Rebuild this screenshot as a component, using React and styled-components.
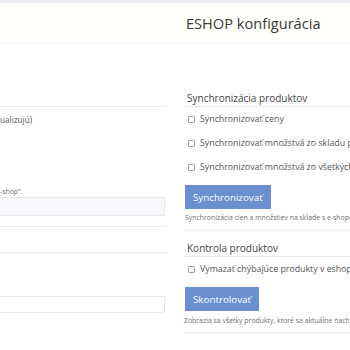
import React from "react";
import styled, { createGlobalStyle } from "styled-components";

const Global = createGlobalStyle`
  html, body { margin: 0; padding: 0; background: #ffffff; }
  body { font-family: "Open Sans", "Noto Sans", Arial, sans-serif; color: #444; }
`;

const Page = styled.div`
  width: 350px;
  height: 350px;
  overflow: hidden;
  background: #ffffff;
  display: flex;
  flex-direction: column;
`;

const TopBand = styled.div`
  height: 3px;
  background: #ebecee;
  flex: none;
`;

const Header = styled.header`
  height: 40px;
  flex: none;
  background: #fffffb;
  border-bottom: 1px solid #f0f0f0;
  display: flex;
  align-items: center;
  padding-left: 186px;
`;

const Title = styled.h1`
  margin: 0;
  font-size: 14.6px;
  font-weight: 400;
  color: #3a3a3a;
  white-space: nowrap;
`;

const Body = styled.div`
  display: grid;
  grid-template-columns: 167px 1fr;
  column-gap: 8px;
  flex: 1;
  min-height: 0;
`;

const LeftCol = styled.div`
  display: flex;
  flex-direction: column;
  min-width: 0;
`;

const Block = styled.div`
  height: ${(p) => p.$h}px;
  border-bottom: 1px solid #ebebeb;
  flex: none;
`;

const LeftLabel = styled.div`
  height: 24px;
  display: flex;
  align-items: center;
  font-size: 8.2px;
  color: #555;
  white-space: nowrap;
`;

const LeftGroup = styled.div`
  padding-top: ${(p) => p.$top || 0}px;
  padding-bottom: ${(p) => p.$bottom || 0}px;
  border-bottom: ${(p) => (p.$line ? "1px solid #ebebeb" : "none")};
  flex: none;
`;

const Field = styled.div`
  width: 165px;
  height: ${(p) => p.$h}px;
  box-sizing: border-box;
  border: 1px solid #e6e8eb;
  border-left: none;
  background: ${(p) => (p.$filled ? "#f5f7fa" : "#ffffff")};
  margin-top: ${(p) => p.$mt || 0}px;
`;

const Hint = styled.div`
  font-size: 6.9px;
  line-height: 10px;
  color: #6f6f6f;
  white-space: nowrap;
  margin-top: ${(p) => p.$mt || 0}px;
  margin-left: ${(p) => p.$ml || 0}px;
`;

const RightCol = styled.div`
  padding-top: 46px;
  padding-left: 9px;
  min-width: 0;
`;

const Section = styled.section`
  border-bottom: 1px solid #eeeeee;
  padding-bottom: ${(p) => p.$pb}px;
  margin-top: ${(p) => p.$mt || 0}px;
`;

const SectionTitle = styled.h2`
  margin: 0;
  height: 16px;
  line-height: 16px;
  padding-left: 3px;
  font-size: 10px;
  font-weight: 400;
  color: #444;
  border-bottom: 1px solid #e6e6e6;
  white-space: nowrap;
`;

const CheckRow = styled.label`
  height: 24px;
  display: flex;
  align-items: center;
  gap: 5px;
  padding-left: 4px;
  font-size: 8.8px;
  color: #555;
  white-space: nowrap;
`;

const Box = styled.span`
  width: 7px;
  height: 7px;
  box-sizing: border-box;
  border: 1px solid #9a9a9a;
  border-radius: 1.5px;
  background: #fff;
  flex: none;
`;

const Button = styled.button`
  display: block;
  margin: 6px 0 0 1px;
  height: 24px;
  padding: 0 8px;
  border: none;
  border-radius: 0;
  background: #6a8fd0;
  color: #ffffff;
  font-family: inherit;
  font-size: 9.8px;
  cursor: pointer;
`;

export default function App() {
  return (
    <Page>
      <Global />
      <TopBand />
      <Header>
        <Title>ESHOP konfigurácia</Title>
      </Header>
      <Body>
        <LeftCol>
          <Block $h={62} />
          <LeftLabel>ualizujú)</LeftLabel>
          <LeftGroup $top={56} $bottom={10} $line>
            <Hint>-shop".</Hint>
            <Field $h={19} $filled />
          </LeftGroup>
          <Block $h={25} />
          <Field $h={17} $mt={43} />
        </LeftCol>
        <RightCol>
          <Section $pb={7}>
            <SectionTitle>Synchronizácia produktov</SectionTitle>
            <CheckRow><Box />Synchronizovať ceny</CheckRow>
            <CheckRow><Box />Synchronizovať množstvá zo skladu predajne</CheckRow>
            <CheckRow><Box />Synchronizovať množstvá zo všetkých skladov</CheckRow>
            <Button>Synchronizovať</Button>
            <Hint $mt={4} $ml={1}>Synchronizácia cien a množstiev na sklade s e-shopom.</Hint>
          </Section>
          <Section $mt={9} $pb={6}>
            <SectionTitle>Kontrola produktov</SectionTitle>
            <CheckRow><Box />Vymazať chýbajúce produkty v eshope</CheckRow>
            <Button>Skontrolovať</Button>
            <Hint $mt={5}>Zobrazia sa všetky produkty, ktoré sa aktuálne nachádzajú v eshope.</Hint>
          </Section>
        </RightCol>
      </Body>
    </Page>
  );
}
